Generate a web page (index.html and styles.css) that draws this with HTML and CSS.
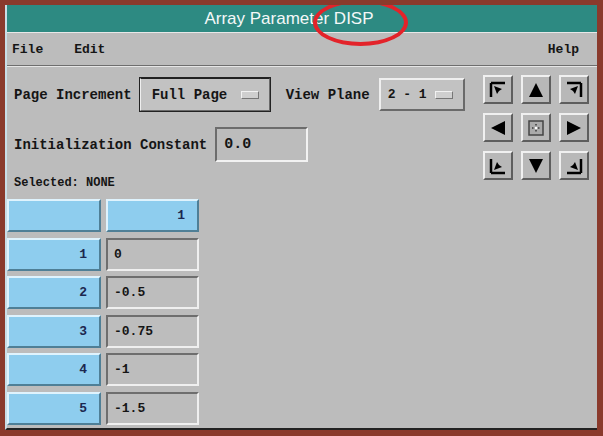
FILE: index.html
```html
<!DOCTYPE html>
<html>
<head>
    <title>Array Parameter DISP</title>
    <link rel="stylesheet" href="styles.css">
</head>
<body>
    <div class="window">
        <div class="titlebar">Array Parameter DISP</div>
        <div class="callout"></div>
        <div class="menubar">
            <span class="menu">File</span>
            <span class="menu">Edit</span>
            <span class="menu help">Help</span>
        </div>

        <div class="top">
            <div class="controls">
                <div class="row">
                    <span class="label">Page Increment</span>
                    <div class="option wide focused">Full Page <span class="knob"></span></div>
                    <span class="label plane">View Plane</span>
                    <div class="option narrow">2 - 1 <span class="knob"></span></div>
                </div>
                <div class="row">
                    <span class="label">Initialization Constant</span>
                    <div class="field">0.0</div>
                </div>
                <div class="selected">Selected: NONE</div>
            </div>

            <div class="arrows">
                <button class="arrow"><svg viewBox="0 0 20 20"><path d="M3 3h14M3 3v14" stroke="#000" stroke-width="2.5" fill="none"/><path d="M6 6l8 3-3 2-2 3z" fill="#000"/></svg></button>
                <button class="arrow"><svg viewBox="0 0 20 20"><path d="M10 3l7 14H3z" fill="#000"/></svg></button>
                <button class="arrow"><svg viewBox="0 0 20 20"><path d="M3 3h14M17 3v14" stroke="#000" stroke-width="2.5" fill="none"/><path d="M14 6l-8 3 3 2 2 3z" fill="#000"/></svg></button>
                <button class="arrow"><svg viewBox="0 0 20 20"><path d="M3 10l14-7v14z" fill="#000"/></svg></button>
                <button class="arrow"><svg viewBox="0 0 20 20"><rect x="3" y="3" width="14" height="14" fill="#aaa" stroke="#444" stroke-width="1.5"/><path d="M10 6v8M6 10h8" stroke="#000" stroke-width="1" stroke-dasharray="1.5 1.5"/><rect x="9" y="9" width="2" height="2" fill="#fff"/></svg></button>
                <button class="arrow"><svg viewBox="0 0 20 20"><path d="M17 10L3 3v14z" fill="#000"/></svg></button>
                <button class="arrow"><svg viewBox="0 0 20 20"><path d="M3 17h14M3 3v14" stroke="#000" stroke-width="2.5" fill="none"/><path d="M6 14l8-3-3-2-2-3z" fill="#000"/></svg></button>
                <button class="arrow"><svg viewBox="0 0 20 20"><path d="M10 17l7-14H3z" fill="#000"/></svg></button>
                <button class="arrow"><svg viewBox="0 0 20 20"><path d="M3 17h14M17 3v14" stroke="#000" stroke-width="2.5" fill="none"/><path d="M14 14l-8-3 3-2 2-3z" fill="#000"/></svg></button>
            </div>
        </div>

        <div class="table">
            <div class="cell head"></div>
            <div class="cell head num">1</div>
            <div class="cell head num">1</div>
            <div class="cell value">0</div>
            <div class="cell head num">2</div>
            <div class="cell value">-0.5</div>
            <div class="cell head num">3</div>
            <div class="cell value">-0.75</div>
            <div class="cell head num">4</div>
            <div class="cell value">-1</div>
            <div class="cell head num">5</div>
            <div class="cell value">-1.5</div>
        </div>
    </div>
</body>
</html>
```

FILE: styles.css
```css
body {
    margin: 0;
    padding: 5px 6px 6px 5px;
    background-color: #8a3a2c;
    font-family: "Liberation Mono", monospace;
    font-weight: bold;
    font-size: 14px;
    color: #151515;
}

.window {
    position: relative;
    width: 592px;
    height: 425px;
    box-sizing: border-box;
    background-color: #bcbcbc;
    border-left: 2px solid #c9dde6;
    border-bottom: 2px solid #222;
    overflow: hidden;
}

.titlebar {
    height: 27px;
    line-height: 27px;
    background-color: #2d8a82;
    color: #f4f8f8;
    text-align: center;
    font-family: "Liberation Sans", Arial, sans-serif;
    font-weight: normal;
    font-size: 17px;
    padding-right: 26px;
}

.callout {
    position: absolute;
    left: 306px;
    top: -6px;
    width: 87px;
    height: 39px;
    border: 4px solid #e3232a;
    border-radius: 50%;
}

.menubar {
    display: flex;
    height: 32px;
    align-items: center;
    padding: 0 18px 0 5px;
    border-top: 1px solid #e8e8e8;
    border-bottom: 1px solid #6e6e6e;
    box-shadow: 0 1px 0 #e6e6e6;
    font-size: 13px;
}

.menu {
    margin-right: 31px;
}

.menu.help {
    margin-left: auto;
    margin-right: 0;
}

.top {
    display: flex;
    justify-content: space-between;
    padding-right: 8px;
}

.controls {
    padding-top: 11px;
}

.row {
    display: flex;
    align-items: center;
    height: 35px;
    margin-bottom: 15px;
}

.label {
    margin-left: 7px;
    margin-right: 7px;
}

.label.plane {
    margin-left: 15px;
    margin-right: 9px;
}

.option {
    display: flex;
    align-items: center;
    justify-content: space-between;
    box-sizing: border-box;
    height: 33px;
    padding: 0 10px 0 11px;
    border: 2px solid;
    border-color: #efefef #6a6a6a #6a6a6a #efefef;
    background-color: #c2c2c2;
}

.option.wide {
    width: 132px;
    height: 35px;
}

.option.focused {
    outline: 1px solid #222;
    outline-offset: -1px;
    border-top-color: #202020;
}

.option.narrow {
    width: 86px;
    padding-left: 7px;
    font-size: 13px;
}

.knob {
    width: 16px;
    height: 6px;
    border: 1px solid;
    border-color: #f2f2f2 #777 #777 #f2f2f2;
    background-color: #cfcfcf;
}

.field {
    box-sizing: border-box;
    width: 93px;
    height: 35px;
    line-height: 31px;
    padding-left: 7px;
    margin-left: 1px;
    border: 2px solid;
    border-color: #6c6c6c #f2f2f2 #f2f2f2 #6c6c6c;
    font-size: 15px;
}

.selected {
    margin-top: -1px;
    margin-left: 7px;
    font-size: 12px;
}

.arrows {
    display: grid;
    grid-template-columns: repeat(3, 30px);
    grid-template-rows: repeat(3, 29px);
    column-gap: 8px;
    row-gap: 9px;
    margin-top: 9px;
}

.arrow {
    box-sizing: border-box;
    padding: 3px;
    border: 2px solid;
    border-color: #f0f0f0 #5e5e5e #5e5e5e #f0f0f0;
    background-color: #b8b8b8;
}

.arrow svg {
    display: block;
    width: 20px;
    height: 20px;
}

.table {
    display: grid;
    grid-template-columns: 94px 93px;
    grid-auto-rows: 33px;
    column-gap: 5px;
    row-gap: 5.5px;
    margin-top: 9px;
}

.cell {
    box-sizing: border-box;
    display: flex;
    align-items: center;
    border: 2px solid;
    font-size: 13px;
}

.cell.head {
    background-color: #8ecdee;
    border-color: #dff3fd #4f7f96 #4f7f96 #dff3fd;
    color: #1c2850;
}

.cell.num {
    justify-content: flex-end;
    padding-right: 12px;
}

.cell.value {
    background-color: #bdbdbd;
    border-color: #6e6e6e #efefef #efefef #6e6e6e;
    padding-left: 6px;
}
```
